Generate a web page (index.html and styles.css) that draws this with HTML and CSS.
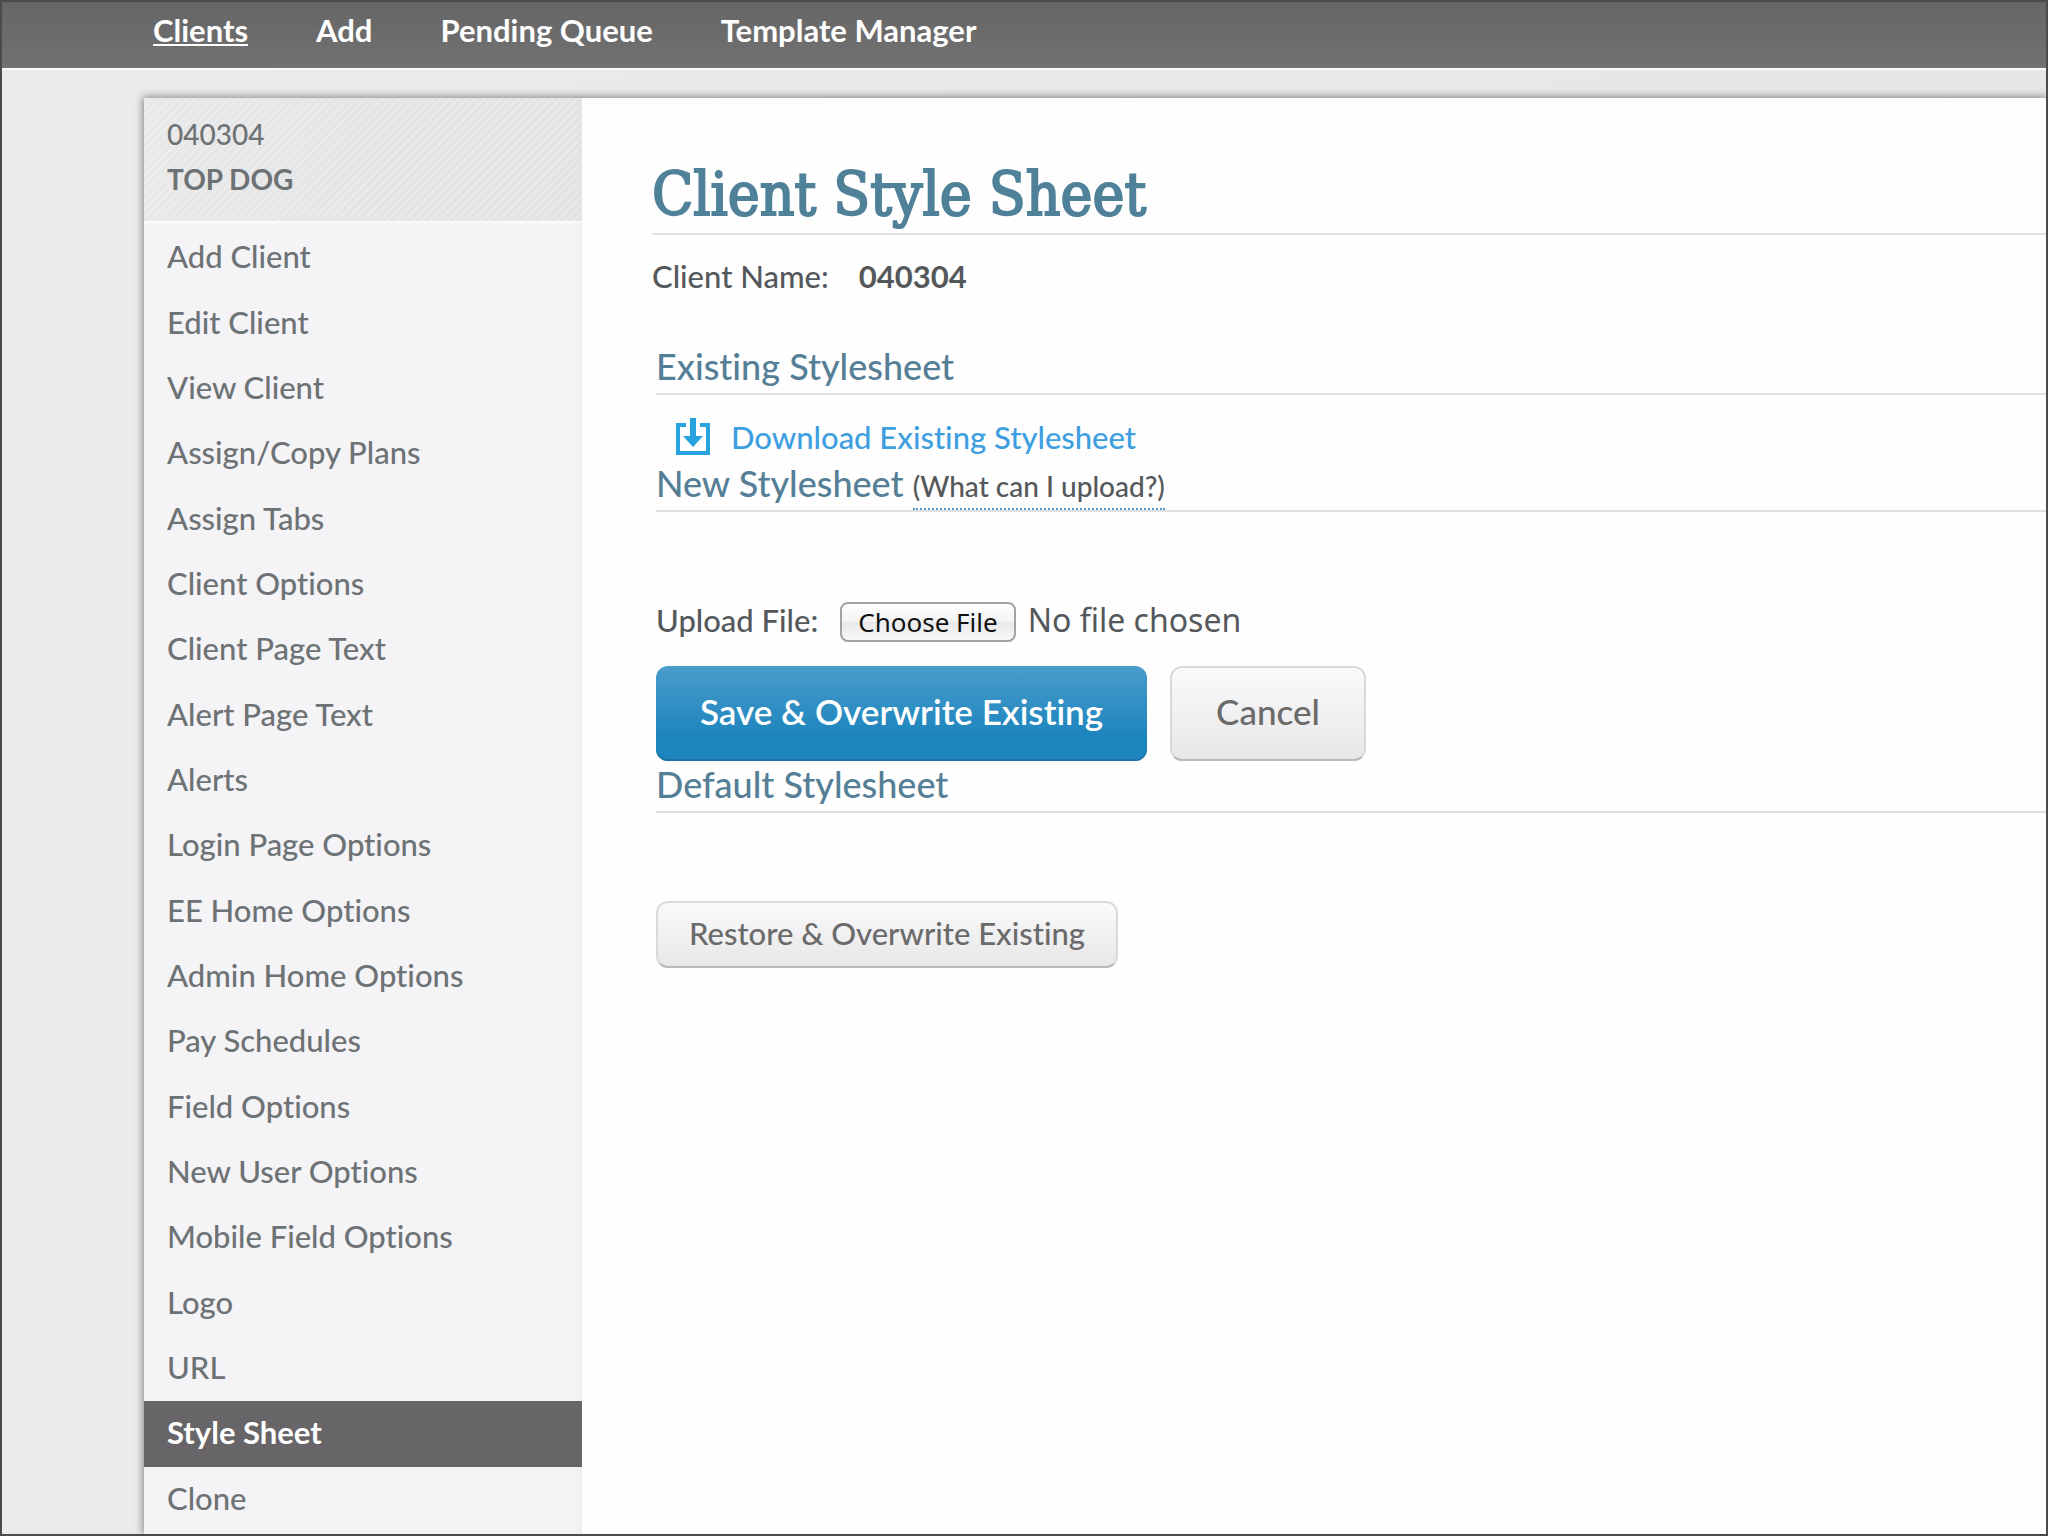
FILE: index.html
```
<!DOCTYPE html>
<html lang="en">
<head>
<meta charset="utf-8">
<title>Client Style Sheet</title>
<link rel="stylesheet" href="styles.css">
</head>
<body>
<nav class="topnav">
  <a class="topnav-link is-current" href="#">Clients</a>
  <a class="topnav-link" href="#">Add</a>
  <a class="topnav-link" href="#">Pending Queue</a>
  <a class="topnav-link" href="#">Template Manager</a>
</nav>
<div class="shell">
  <aside class="sidebar">
    <div class="client">
      <div>040304</div>
      <strong class="client-name">TOP DOG</strong>
    </div>
    <ul class="menu">
      <li><a href="#">Add Client</a></li>
      <li><a href="#">Edit Client</a></li>
      <li><a href="#">View Client</a></li>
      <li><a href="#">Assign/Copy Plans</a></li>
      <li><a href="#">Assign Tabs</a></li>
      <li><a href="#">Client Options</a></li>
      <li><a href="#">Client Page Text</a></li>
      <li><a href="#">Alert Page Text</a></li>
      <li><a href="#">Alerts</a></li>
      <li><a href="#">Login Page Options</a></li>
      <li><a href="#">EE Home Options</a></li>
      <li><a href="#">Admin Home Options</a></li>
      <li><a href="#">Pay Schedules</a></li>
      <li><a href="#">Field Options</a></li>
      <li><a href="#">New User Options</a></li>
      <li><a href="#">Mobile Field Options</a></li>
      <li><a href="#">Logo</a></li>
      <li><a href="#">URL</a></li>
      <li><a class="is-active" href="#">Style Sheet</a></li>
      <li><a href="#">Clone</a></li>
    </ul>
  </aside>
  <main class="content">
    <h1>Client Style Sheet</h1>
    <p class="client-row"><span>Client Name:</span><strong>040304</strong></p>
    <section class="block existing">
      <h2>Existing Stylesheet</h2>
      <a class="download" href="#">
        <svg width="36" height="38" viewBox="0 0 36 38" aria-hidden="true">
          <path d="M11 7H3V35H33V7H25" fill="none" stroke="#27a3e0" stroke-width="4"/>
          <path d="M15 0h6v18h7L18 29 8 18h7z" fill="#27a3e0"/>
        </svg>
        <span>Download Existing Stylesheet</span>
      </a>
    </section>
    <section class="block">
      <h2>New Stylesheet <a class="hint" href="#">(What can I upload?)</a></h2>
      <form>
        <div class="upload">
          <label for="file">Upload File:</label>
          <input type="file" id="file">
        </div>
        <div class="actions">
          <button class="btn btn-primary" type="submit">Save &amp; Overwrite Existing</button>
          <button class="btn btn-large" type="reset">Cancel</button>
        </div>
      </form>
    </section>
    <section class="block">
      <h2>Default Stylesheet</h2>
      <button class="btn btn-restore" type="button">Restore &amp; Overwrite Existing</button>
    </section>
  </main>
</div>
</body>
</html>
```
FILE: styles.css
```
* { box-sizing: border-box; }

body {
  margin: 0;
  min-height: 100vh;
  display: flex;
  flex-direction: column;
  border: 2px solid #4b4b4b;
  background: linear-gradient(90deg, #ebebeb, #e6e6e8);
  color: #54585b;
  font: 500 31px/40px Lato, "Liberation Sans", sans-serif;
  font-variant-ligatures: none;
  overflow-x: hidden;
}

a { color: inherit; text-decoration: none; }

.topnav {
  display: flex;
  gap: 68px;
  padding: 1px 0 11px 151px;
  background: linear-gradient(#666, #737171);
  box-shadow: 0 2px #fafafa;
  color: #fff;
  font-weight: 700;
  line-height: 54px;
}
.topnav-link.is-current {
  text-decoration: underline;
  text-decoration-thickness: 2px;
  text-underline-offset: 2px;
  text-decoration-skip-ink: none;
}

.shell {
  flex: 1;
  display: flex;
  margin: 30px 0 0 142px;
  background: #fefefe;
  box-shadow: 0 0 8px 1px rgba(0, 0, 0, .45);
}

.sidebar {
  flex: 0 0 438px;
  background: linear-gradient(90deg, #f4f3f6 98%, #efeef1);
  color: #6d7275;
}
.client {
  padding: 14px 23px 19px;
  border-bottom: 2px solid #fcfcfc;
  background:
    repeating-linear-gradient(135deg, rgba(255, 255, 255, .22) 0 2px, transparent 2px 6px),
    linear-gradient(90deg, #e8e8e8, #e3e2e4);
  font-size: 28px;
  line-height: 45px;
}
.client-name { display: block; font-weight: 700; }

.menu { list-style: none; margin: 0; padding: 2px 0 0; }
.menu a {
  display: block;
  height: 65px;
  padding: 0 23px;
  line-height: 63px;
}
/* Every third row takes the spare pixel of the row rhythm */
.menu li:nth-child(3n+1) a { height: 66px; }
.menu .is-active { background: #676567; color: #fff; font-weight: 700; }

.content { flex: 1; min-width: 0; padding: 57px 0 60px 70px; }

h1, h2, p { margin: 0; font-weight: 500; }
h1 {
  border-bottom: 2px solid #dfe2e4;
  color: #4f8199;
  font-family: "DejaVu Serif Condensed", "DejaVu Serif", serif;
  font-size: 60px;
  line-height: 78px;
  -webkit-text-stroke: 2px #4f8199;
}
.client-row { display: flex; gap: 30px; margin-top: 21px; }

.block { margin-left: 4px; }
.existing { margin-top: 47px; }
h2 {
  padding-bottom: 3px;
  border-bottom: 2px solid #dddee0;
  color: #557f96;
  font-size: 36px;
  line-height: 47px;
}
.hint {
  padding-bottom: 5px;
  border-bottom: 2px dotted #4a9ddd;
  color: #54585b;
  font-size: 28px;
  line-height: 28px;
}
.download {
  display: flex;
  gap: 20px;
  padding: 23px 0 4px 19px;
  color: #3d9fe0;
  line-height: 38px;
}

.upload { display: flex; align-items: flex-start; gap: 22px; margin-top: 88px; }
.upload input {
  flex: 1;
  height: 46px;
  font: 32px/40px "Noto Sans", "Open Sans", sans-serif;
  color: #54585b;
}
.upload input::file-selector-button {
  height: 40px;
  margin: 0 12px 0 0;
  padding: 0 16px;
  border: 2px solid #a3a2a6;
  border-radius: 8px;
  background: linear-gradient(#fff, #f3f3f4 50%, #e9e9ea 51%, #f8f8f8);
  color: #111;
  font: 26px/34px "Noto Sans", "Open Sans", sans-serif;
}

.actions { display: flex; gap: 23px; margin-top: 20px; }
.btn {
  padding: 0 31px 4px;
  border: 2px solid #dad9dc;
  border-bottom-color: #b9b8bb;
  border-radius: 12px;
  background: linear-gradient(#faf9fb, #e7e7e8);
  color: #6a6a6a;
  font: inherit;
}
.btn-primary, .btn-large { height: 95px; padding: 0 44px 5px; font-size: 35px; }
.btn-primary {
  border: 0;
  background: linear-gradient(#4a9ccb, #1c85bd 75%, #1c85bd);
  box-shadow: inset 0 -2px #1b73a3;
  color: #fff;
  font-weight: 600;
}
.btn-restore { height: 67px; margin-top: 88px; }
```
